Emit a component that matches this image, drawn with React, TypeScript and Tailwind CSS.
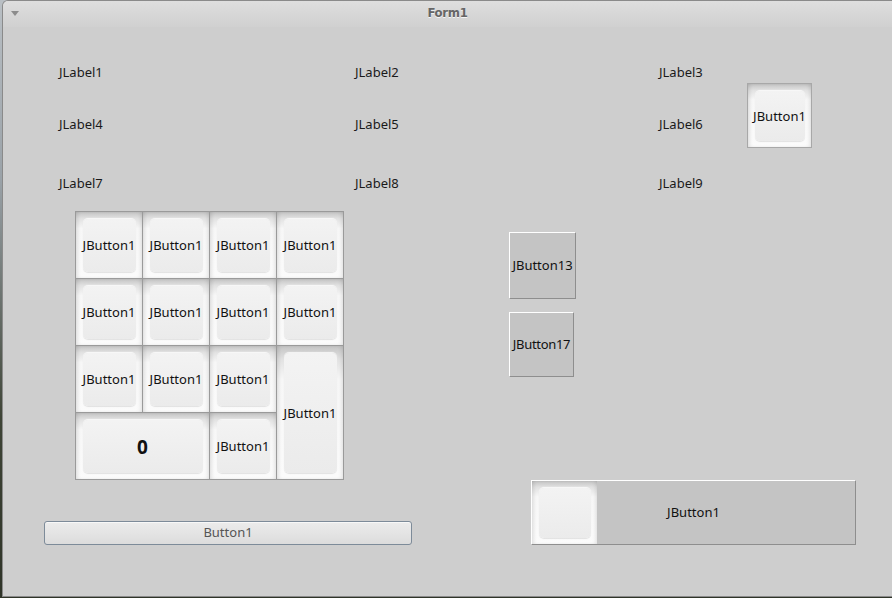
import React from "react";

const font = { fontFamily: '"Noto Sans", "Open Sans", sans-serif' };

function Keycap({ children, bold = false }: { children?: React.ReactNode; bold?: boolean }) {
  return (
    <div className="relative h-full w-full bg-[linear-gradient(to_bottom,#c4c4c4_0%,#e2e2e2_10%,#f7f7f7_25%,#fbfbfb_100%)] shadow-[inset_3px_0_4px_-2px_rgba(0,0,0,0.14),inset_-3px_0_4px_-2px_rgba(0,0,0,0.12)]">
      <div className="absolute left-[7px] right-[6px] top-[7px] bottom-[6px] rounded-[5px] bg-[linear-gradient(to_bottom,#f3f3f3,#ebebeb)] shadow-[0_1px_1px_rgba(0,0,0,0.1),0_-1px_1px_rgba(255,255,255,0.8)]" />
      <div
        className={
          "absolute inset-0 flex items-center justify-center pt-[2px] text-[#111] " +
          (bold ? "text-[19px] font-bold" : "text-[13px]")
        }
        style={font}
      >
        {children}
      </div>
    </div>
  );
}

function Label({ children }: { children: React.ReactNode }) {
  return (
    <span className="block text-[13px] leading-4 text-[#1a1a1a] whitespace-nowrap" style={font}>
      {children}
    </span>
  );
}

export default function App() {
  return (
    <div className="relative h-[598px] w-[892px] overflow-hidden bg-[linear-gradient(to_bottom,#b9bfc4_0%,#9aa2a8_30%,#3e4436_70%,#2f3428_100%)]">
      <div className="ml-[2px] flex h-[597px] w-[890px] flex-col overflow-hidden rounded-tl-[6px] border-l border-t border-b border-[#8a8a8a] bg-[#cecece]">
        {/* title bar */}
        <div className="relative flex h-[26px] shrink-0 items-center justify-center bg-[linear-gradient(to_bottom,#dedede,#d0d0d0)]">
          <div className="absolute left-[8px] top-[10px] h-0 w-0 border-x-[4px] border-t-[5px] border-x-transparent border-t-[#8c8c8c]" />
          <span
            className="-mt-[2px] text-[13px] font-bold text-[#666] [text-shadow:0_1px_0_#f4f4f4]"
            style={{ fontFamily: '"DejaVu Sans Condensed", "DejaVu Sans", sans-serif', letterSpacing: "-0.3px" }}
          >
            Form1
          </span>
        </div>

        {/* content */}
        <div className="flex flex-1 flex-col">
          {/* labels */}
          <div className="flex flex-col pt-[37px]">
            <div className="grid h-4 grid-cols-[296px_304px_1fr] pl-[56px]">
              <Label>JLabel1</Label>
              <Label>JLabel2</Label>
              <Label>JLabel3</Label>
            </div>
            <div className="mt-[36px] grid h-4 grid-cols-[296px_304px_1fr] pl-[56px]">
              <Label>JLabel4</Label>
              <Label>JLabel5</Label>
              <div className="flex h-4 items-start">
                <div className="w-[88px]">
                  <Label>JLabel6</Label>
                </div>
                <div className="-mt-[33px] h-[65px] w-[65px] shrink-0 border border-[#a8a8a8]">
                  <Keycap>JButton1</Keycap>
                </div>
              </div>
            </div>
            <div className="mt-[43px] grid h-4 grid-cols-[296px_304px_1fr] pl-[56px]">
              <Label>JLabel7</Label>
              <Label>JLabel8</Label>
              <Label>JLabel9</Label>
            </div>
          </div>

          {/* lower area */}
          <div className="mt-[20px] flex">
            <div className="flex w-[506px] flex-col">
              <div className="ml-[72px] grid w-[269px] grid-cols-[repeat(4,66px)] grid-rows-[repeat(4,66px)] gap-px border border-[#9a9a9a] bg-[#9a9a9a]">
                <Keycap>JButton1</Keycap>
                <Keycap>JButton1</Keycap>
                <Keycap>JButton1</Keycap>
                <Keycap>JButton1</Keycap>
                <Keycap>JButton1</Keycap>
                <Keycap>JButton1</Keycap>
                <Keycap>JButton1</Keycap>
                <Keycap>JButton1</Keycap>
                <Keycap>JButton1</Keycap>
                <Keycap>JButton1</Keycap>
                <Keycap>JButton1</Keycap>
                <div className="row-span-2">
                  <Keycap>JButton1</Keycap>
                </div>
                <div className="col-span-2">
                  <Keycap bold>0</Keycap>
                </div>
                <Keycap>JButton1</Keycap>
              </div>
              <div className="ml-[41px] mt-[41px] flex h-[24px] w-[368px] items-center justify-center rounded-[3px] border border-[#7d8b99] bg-[linear-gradient(to_bottom,#ececec,#dcdcdc)] shadow-[inset_0_1px_0_#f8f8f8]">
                <span className="text-[13px] text-[#555]" style={font}>
                  Button1
                </span>
              </div>
            </div>

            <div className="flex flex-col">
              <div className="mt-[21px] flex h-[67px] w-[67px] items-center justify-center border-l border-t border-b border-r border-l-white border-t-white border-b-[#8e8e8e] border-r-[#8e8e8e] bg-[#c4c4c4]">
                <span className="text-[13px] text-[#111]" style={font}>
                  JButton13
                </span>
              </div>
              <div className="mt-[13px] flex h-[65px] w-[65px] items-center justify-center border-l border-t border-b border-r border-l-white border-t-white border-b-[#8e8e8e] border-r-[#8e8e8e] bg-[#c4c4c4]">
                <span className="text-[13px] tracking-[-0.3px] text-[#111]" style={font}>
                  JButton17
                </span>
              </div>
              <div className="relative ml-[22px] mt-[103px] h-[65px] w-[325px] border-l border-t border-b border-r border-l-white border-t-white border-b-[#8e8e8e] border-r-[#8e8e8e] bg-[#c4c4c4]">
                <div className="absolute left-0 top-0 h-[63px] w-[65px]">
                  <Keycap />
                </div>
                <div className="absolute inset-0 flex items-center justify-center">
                  <span className="text-[13px] text-[#111]" style={font}>
                    JButton1
                  </span>
                </div>
              </div>
            </div>
          </div>
        </div>
      </div>
    </div>
  );
}
